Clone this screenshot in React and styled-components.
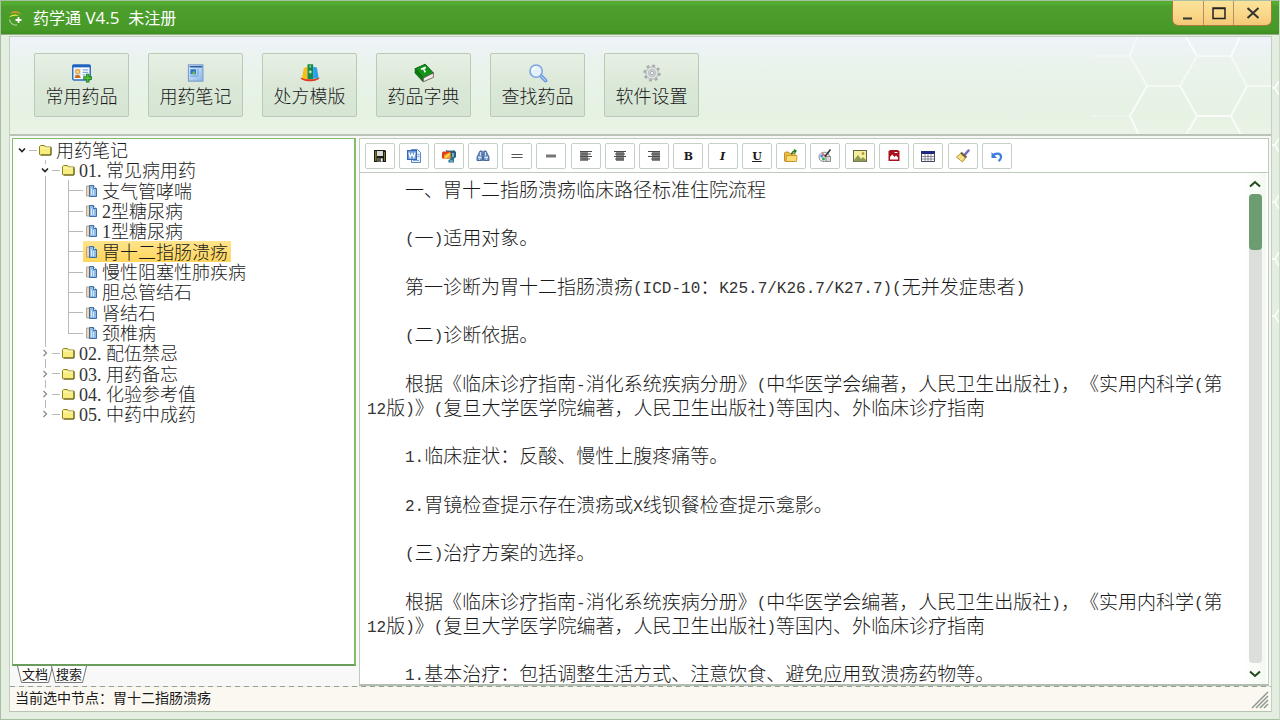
import React from "react";
import styled, { createGlobalStyle, css } from "styled-components";

const GlobalStyle = createGlobalStyle`
  *, *::before, *::after {
    box-sizing: border-box;
  }
  body {
    margin: 0;
    color: #1a1a1a;
    font-family: "Noto Sans CJK SC", sans-serif;
  }
  button {
    margin: 0;
    padding: 0;
    color: inherit;
    font: inherit;
    cursor: pointer;
  }
  svg {
    display: block;
    flex: none;
  }
`;

/* ---------- text ---------- */

// line-height 0 keeps the latin runs from growing the line box
const Latin = styled.span`
  color: #333;
  font-family: ${({ $serif }) => ($serif ? '"Liberation Serif", serif' : '"Liberation Mono", monospace')};
  font-size: ${({ $serif }) => ($serif ? 18 : 16)}px;
  font-weight: 400;
  line-height: 0;
  vertical-align: ${({ $serif }) => ($serif ? 0 : 1)}px;
`;

// Latin runs get a face that is half as wide as the Chinese characters
function MixedText({ children, serif }) {
  return children
    .split(/([\x20-\x7e]+)/)
    .filter(Boolean)
    .map((part, i) => (/^[\x20-\x7e]/.test(part) ? <Latin key={i} $serif={serif}>{part}</Latin> : part));
}

/* ---------- window ---------- */

const Window = styled.div`
  position: relative;
  display: flex;
  flex-direction: column;
  height: 100vh;
  border: 1px solid #a9bfa4;
  border-right-color: #cbd8c7;
  background: #e3eee0;
  overflow: hidden;
`;

const TitleBar = styled.header`
  display: flex;
  align-items: center;
  flex: none;
  height: 34px;
  padding: 0 7px;
  border-bottom: 1px solid #8fae84;
  background: linear-gradient(#53ad30 0, #53ad30 3px, #4c9f2c 5px, #479a28 85%, #3f8e22);
`;

const Title = styled.h1`
  flex: 1;
  margin: 0 0 2px 9px;
  color: #fff;
  font-size: 16px;
  font-weight: 400;
  line-height: 24px;
  white-space: pre;
`;

const Version = styled.span`
  font-family: "Open Sans", sans-serif;
  font-size: 17px;
  line-height: 0;
`;

const WindowButtons = styled.div`
  display: flex;
  align-self: flex-start;
  border: 1px solid #a5793f;
  border-top: 0;
  border-radius: 0 0 6px 6px;
  overflow: hidden;
`;

const WindowButton = styled.button`
  display: flex;
  align-items: center;
  justify-content: center;
  width: ${({ $wide }) => ($wide ? 38 : 30)}px;
  height: 24px;
  border: 0;
  background: linear-gradient(#fbe39a, #f9d98a 50%, #f3c877);
  & + & {
    border-left: 1px solid #b98f60;
  }
`;

const Frame = styled.div`
  position: relative;
  display: flex;
  flex-direction: column;
  flex: 1;
  min-height: 0;
  margin: 1px 7px 7px 8px;
  border: 1px solid #c3cfc0;
  border-bottom-color: #b5c5b1;
  background: #fff;
`;

/* ---------- ribbon ---------- */

const Ribbon = styled.nav`
  position: relative;
  display: flex;
  gap: 19px;
  flex: none;
  height: 99px;
  padding: 16px 24px 0;
  border-bottom: 2px solid #b9c4b7;
  background: linear-gradient(#eef3f9, #e9f3ea 35%, #e6f2e3 80%, #eaf3e6);
  overflow: hidden;
`;

const RibbonButton = styled.button`
  position: relative;
  display: flex;
  flex-direction: column;
  align-items: center;
  width: 95px;
  height: 64px;
  padding-top: 9px;
  border: 1px solid #b9cab8;
  border-radius: 2px;
  background: linear-gradient(#e7f0e4, #dbe8d8 50%, #d6e6d3);
  font-size: 18px;
  font-weight: 300;
  line-height: 24px;
`;

const Pattern = styled.svg`
  position: absolute;
  top: ${({ $top }) => $top}px;
  right: 0;
  fill: none;
  stroke: #fff;
`;

/* ---------- main area ---------- */

const Main = styled.main`
  display: flex;
  gap: 3px;
  flex: 1;
  min-height: 0;
  padding: 2px 2px 0;
  background: #f7f8f7;
`;

const Side = styled.aside`
  display: flex;
  flex-direction: column;
  flex: none;
  width: 344px;
`;

const TreePanel = styled.div`
  flex: 1;
  min-height: 0;
  border: 2px solid #82bd6b;
  border-width: 1px 2px 2px 1px;
  border-bottom-color: #6a9c5c;
  background: #fff;
`;

const Tree = styled.ul`
  margin: 0;
  padding: 1px 0 0 1px;
  list-style: none;
  font-size: 18px;
  font-weight: 300;
`;

const TreeRow = styled.li`
  display: flex;
  height: 20px;
  &:nth-child(3n) {
    height: 21px;
  }
`;

const guide = css`
  background: linear-gradient(#b9b9b9, #b9b9b9) no-repeat 8px 0 / 1px ${({ $line }) => $line || "0"};
`;

const Guide = styled.span`
  width: 23px;
  ${guide}
`;

const Branch = styled.span`
  display: flex;
  align-items: center;
  width: 23px;
  ${guide}
  &::after {
    content: "";
    flex: 1;
    height: 1px;
    margin-left: ${({ $leaf }) => ($leaf ? 8 : 0)}px;
    background: #b9b9b9;
  }
`;

const Toggle = styled.button`
  display: flex;
  align-items: center;
  justify-content: center;
  width: 15px;
  height: 12px;
  border: 0;
  background: #fff;
`;

const TreeLabel = styled.button`
  display: flex;
  align-items: center;
  gap: 4px;
  padding: 0 3px 0 2px;
  border: 0;
  background: ${({ $selected }) => ($selected ? "linear-gradient(#ffe48c, #ffd65c)" : "none")};
  white-space: nowrap;
`;

const NodeText = styled.span`
  padding-bottom: 2px;
  line-height: 18px;
`;

const Tabs = styled.div`
  display: flex;
  flex: none;
  height: 20px;
  padding-left: 5px;
`;

const Tab = styled.button`
  position: relative;
  width: 36px;
  height: 18px;
  margin-right: -2px;
  padding-bottom: 2px;
  border: 0;
  background: none;
  font-size: 13px;
  line-height: 14px;
  isolation: isolate;
  svg {
    position: absolute;
    inset: 0;
    z-index: -1;
  }
`;

/* ---------- editor ---------- */

const Editor = styled.section`
  display: flex;
  flex-direction: column;
  flex: 1;
  min-width: 0;
  border: 1px solid #bccbba;
  border-bottom: 2px solid #b3beb1;
  background: #fff;
`;

const EditorBar = styled.div`
  flex: none;
  height: 34px;
  padding: 4px 5px;
  border-bottom: 1px solid #bccbba;
`;

const EditorTools = styled.div`
  display: flex;
  justify-content: space-between;
  max-width: 647px;
`;

const Tool = styled.button`
  display: flex;
  align-items: center;
  justify-content: center;
  width: 30px;
  height: 26px;
  border: 1px solid #c5d0c4;
  border-radius: 2px;
  background: #fff;
  font: bold 11px "DejaVu Serif", serif;
  font-style: ${({ $italic }) => ($italic ? "italic" : "normal")};
  text-decoration: ${({ $underline }) => ($underline ? "underline" : "none")};
`;

const EditorBody = styled.div`
  display: flex;
  flex: 1;
  min-height: 0;
`;

const Page = styled.article`
  flex: 1;
  min-width: 0;
  padding: 4px 10px 0 7px;
  font-size: 19px;
  font-weight: 300;
  line-height: 24px;
  overflow: hidden;
  text-spacing-trim: space-all;
  p {
    margin: 0 0 24px;
    text-indent: 38px;
  }
  p:nth-child(even) {
    margin-bottom: 25px;
  }
`;

const ScrollBar = styled.div`
  display: flex;
  flex-direction: column;
  align-items: center;
  flex: none;
  width: 22px;
  margin-right: 2px;
  background: linear-gradient(90deg, #fff, #f3f8f1);
`;

const ScrollArrow = styled.button`
  display: flex;
  align-items: center;
  justify-content: center;
  width: 20px;
  height: 21px;
  border: 0;
  background: none;
`;

const ScrollTrack = styled.div`
  flex: 1;
  width: 13px;
  border-radius: 4px;
  background: #dcdedb;
`;

const ScrollThumb = styled.div`
  height: 56px;
  border-radius: 4px;
  background: #6c9c6f;
`;

/* ---------- status bar ---------- */

const StatusBar = styled.footer`
  display: flex;
  align-items: flex-start;
  justify-content: space-between;
  flex: none;
  height: 25px;
  padding: 0 2px 0 5px;
  background: #fbf8f1 repeating-linear-gradient(90deg, #94a293 0 5px, #e8eee6 5px 9px) no-repeat 0 0 / 100% 1px;
  font-size: 14px;
  line-height: 22px;
  svg {
    align-self: flex-end;
    margin-bottom: 2px;
  }
`;

/* ---------- icons ---------- */

const Icon = ({ size = 16, children }) => (
  <svg width={size} height={size} viewBox="0 0 16 16" fill="none" aria-hidden="true">{children}</svg>
);

const LogoIcon = () => (
  <Icon>
    <path d="M2 3.500C5 .5 10 .5 13.500 4.500C10 2.500 6 2.500 2 3.500z" fill="#f0943a" />
    <path d="M1 7.500C3 4 8 3.500 11.500 6C8 5.500 4 5.500 1 7.500z" fill="#f5ea3c" />
    <path d="M1.500 9.500C2 13 5 15.500 9 15" stroke="#a7cf98" strokeWidth="1.300" />
    <path d="M10.500 7v6M7.500 10h6" stroke="#fff" strokeWidth="1.800" />
  </Icon>
);

const CardIcon = () => (
  <Icon size={20}>
    <rect x="0.600" y="1.500" width="14" height="12" rx="1" fill="#fff" stroke="#2c6fc4" strokeWidth="1.200" />
    <path d="M0.500 2.500h14" stroke="#1f62c0" strokeWidth="2" />
    <rect x="2" y="4.500" width="5" height="7.500" fill="#cfe2f8" />
    <circle cx="4.500" cy="6.700" r="2" fill="#f0a02d" />
    <circle cx="4.500" cy="7" r="1" fill="#fbe0b0" />
    <path d="M2.200 12c0-3.500 4.600-3.500 4.600 0z" fill="#d26a12" />
    <path d="M8.500 5.500h4.500M8.500 7.500h4.500M8.500 9.500h2" stroke="#7fa9dc" />
    <path d="M9 12h7M12.500 8.500v7" stroke="#1f7f1c" strokeWidth="2.800" />
    <path d="M9.700 12h5.600M12.500 9.200v5.600" stroke="#4fc03c" strokeWidth="1.400" />
  </Icon>
);

const NoteIcon = () => (
  <Icon size={20}>
    <defs>
      <linearGradient id="note" x2="1" y2="1">
        <stop stopColor="#e6f2ff" />
        <stop offset="1" stopColor="#86b5ec" />
      </linearGradient>
    </defs>
    <rect x="2" y="1.500" width="11.500" height="13" fill="url(#note)" stroke="#7fa0cc" />
    <path d="M3 3h10" stroke="#2a5fa8" strokeWidth="1.200" />
    <rect x="3.500" y="5" width="4.500" height="4" fill="#2f74c9" />
    <path d="M4.500 9l1.800-3 1.500 3z" fill="#6cc04a" />
    <path d="M9.500 4.500v5.500M3.500 10.500h6" stroke="#6f9fd8" strokeWidth=".8" />
  </Icon>
);

const BooksIcon = () => (
  <Icon size={20}>
    <path d="M3 4l3-1v10H1.500z" fill="#f8bd17" />
    <rect x="6" y="1" width="4.500" height="12" fill="#168a49" />
    <path d="M8.200 2v1.500M7 7h2.500M8.200 5.800v2.500" stroke="#b9e9c5" />
    <path d="M10.500 3l3 .5 1.500 9h-4.500z" fill="#2aa0e8" />
    <path d="M.5 11.500c3 2 12 2 15 0 0 4-15 4-15 0z" fill="#e4361d" />
  </Icon>
);

const BookIcon = () => (
  <Icon size={20}>
    <path d="M1 4.500l8-3.500 6.500 7-8 4z" fill="#10951a" stroke="#075c0e" strokeWidth=".8" />
    <path d="M1 4.500L.8 8l6.500 7 .2-3z" fill="#0b7a14" stroke="#075c0e" strokeWidth=".6" />
    <path d="M7.500 12l8-4v3.500l-8 3.500z" fill="#ececec" stroke="#7a5a5a" strokeWidth=".7" />
    <path d="M5.500 5l4-1.500M7.500 4.200L9 7.500" stroke="#fff" strokeWidth="1.300" />
  </Icon>
);

const SearchIcon = () => (
  <Icon size={20}>
    <path d="M10 10l4 4" stroke="#5f92db" strokeWidth="3" strokeLinecap="round" />
    <path d="M10.500 10.500l3.500 3.500" stroke="#b6d3f8" strokeLinecap="round" />
    <circle cx="6.500" cy="6.500" r="4.900" fill="#e4f2fd" stroke="#7fa4e0" strokeWidth="1.300" />
    <path d="M3.500 6a3 3 0 0 1 3-2.500" stroke="#fff" strokeWidth="1.200" />
  </Icon>
);

const GearIcon = () => (
  <Icon size={20}>
    <circle cx="8" cy="8" r="5.900" stroke="#a5a8ab" strokeWidth="2" strokeDasharray="2.200 2.434" />
    <circle cx="8" cy="8" r="4.900" fill="#e4e6e7" stroke="#b0b3b5" strokeWidth=".8" />
    <circle cx="8" cy="8" r="3" fill="#d2d5d6" stroke="#b7babb" strokeWidth=".7" />
    <circle cx="8" cy="8" r="1.400" fill="#f3f5f4" stroke="#9fa2a5" strokeWidth=".7" />
  </Icon>
);

const FolderIcon = () => (
  <svg width="13" height="12" viewBox="0 0 13 12" aria-hidden="true">
    <path d="M.5 10V2.500l1-1h4l1 1.500h5.500v7l-.5 1h-10.500z" fill="#f7ec7d" stroke="#8f8420" />
    <path d="M1.500 4h9.500" stroke="#fffcc8" />
    <path d="M12 3.500v7.500H2" fill="none" stroke="#5e5a1a" />
  </svg>
);

const PageIcon = () => (
  <svg width="13" height="12" viewBox="0 0 13 12" aria-hidden="true">
    <path d="M1.500 1h4v10h-4z" fill="#f5d3ae" stroke="#a3937f" strokeWidth=".8" />
    <path d="M4.500.5h4l3 3v8h-7z" fill="#8fbbe8" stroke="#3d6ea6" />
    <path d="M8.500.5v3h3" fill="#fff" stroke="#3d6ea6" />
    <path d="M6.500 3.500v6.500M8.500 5v5" stroke="#d7e9fb" />
  </svg>
);

const Chevron = ({ open }) => (
  <svg width="8" height="8" viewBox="0 0 8 8" fill="none" aria-hidden="true">
    {open
      ? <path d="M1 2.500l3 3 3-3" stroke="#222" strokeWidth="1.600" />
      : <path d="M2.500 1l3 3-3 3" stroke="#8b8b8b" strokeWidth="1.300" />}
  </svg>
);

const ScrollChevron = ({ down }) => (
  <svg width="12" height="8" viewBox="0 0 12 8" fill="none" aria-hidden="true">
    <path d={down ? "M1 1.500l5 4.500 5-4.500" : "M1 6.500l5-4.500 5 4.500"} stroke="#1f4a18" strokeWidth="2" />
  </svg>
);

const SaveIcon = () => (
  <Icon>
    <path d="M2 2h11l1 1v11H2z" fill="#1b1b14" />
    <path d="M3 3h1.500v10H3zM12 4h1v9h-1z" fill="#77743a" />
    <rect x="5" y="3" width="6" height="5" fill="#d9d9d9" />
    <rect x="5" y="10" width="6" height="4" fill="#5c5c55" />
    <rect x="9" y="10.500" width="1.500" height="3" fill="#fff" />
  </Icon>
);

const WordIcon = () => (
  <Icon>
    <path d="M5.500 1.500h6l3 3v10h-9z" fill="#e4effc" stroke="#5f88c4" />
    <path d="M11.500 6.500h2M11.500 8.500h2M7 12.500h6" stroke="#7ea2d3" />
    <rect x="1.500" y="2.500" width="9" height="9" fill="#6f9ad8" stroke="#3566b3" />
    <path d="M3 4.500l1.200 5L6 5.500l1.800 4 1.200-5" stroke="#fff" strokeWidth="1.200" />
  </Icon>
);

const ZipIcon = () => (
  <Icon>
    <path d="M5 2h8l2 2v5l-2 1.500H6z" fill="#24607f" />
    <path d="M8.500 9h4.500v5.500H7.500V12l2-1z" fill="#2a7394" />
    <path d="M6 2.500h6.500" stroke="#8fc1d6" />
    <path d="M12 5v4" stroke="#bcd9e6" strokeWidth="1.200" />
    <path d="M9 13h3" stroke="#9fc8da" />
    <path d="M1 4.500l1-1h7.500v7H1z" fill="#e33a1b" />
    <path d="M3 10.500V7l5-2.500h1.500v6z" fill="#f5a91d" />
    <path d="M4.500 9.500L8.500 6" stroke="#ffe45a" strokeWidth="1.500" />
  </Icon>
);

const BinocularsIcon = () => (
  <Icon>
    <path d="M5 3h2.200l.3 4.500v5H2V9zM8.800 3H11l3 6v3.500H8.500v-5z" fill="#6d93c6" stroke="#2f5288" strokeWidth=".8" />
    <path d="M3 9.500h3.500M9.500 9.500H13" stroke="#e3eefb" strokeWidth="1.400" />
    <path d="M5.500 4v3.500M10.500 4v3.500M4 11.500h1M11 11.500h1" stroke="#cfe0f5" />
  </Icon>
);

const AlignIcon = ({ type }) => {
  const left = { left: 2, center: 4, right: 6 }[type];
  return (
    <Icon>
      <path d={`M${left} 3h8v10h-8z`} fill="#858585" />
      <path
        d={type === "right" ? "M2 3.500h12M5 6h9M2 8.500h12M5 11h9" : "M2 3.500h12M3 6h10M2 8.500h12M3 11h9"}
        stroke="#4a4a4a"
      />
    </Icon>
  );
};

const OpenIcon = () => (
  <Icon>
    <path d="M1.500 13V5l1-1h3l1 1.500h5.500v8H2z" fill="#f0bd45" stroke="#b27b16" strokeWidth=".8" />
    <path d="M3 13.500l.5-6H14l-.5 6z" fill="#fbdc73" stroke="#c18b20" strokeWidth=".8" />
    <path d="M8.500 6.500C9 4 10.500 3 12.500 3M11 1.500L13 3l-1.500 2" stroke="#267a26" strokeWidth="1.300" />
  </Icon>
);

const PaletteIcon = () => (
  <Icon>
    <path d="M2 9c0-4 5-6 9-4l2 4c0 5-11 7-11 0z" fill="#e8ecf0" stroke="#777f88" strokeWidth=".9" />
    <circle cx="4.800" cy="8" r="1.500" fill="#3d8ae0" />
    <circle cx="6.500" cy="11" r="1.400" fill="#31a54a" />
    <path d="M5.500 5.500l5 5" stroke="#e44" strokeWidth="1.400" />
    <path d="M13.500 1.500L8 8.500" stroke="#333" strokeWidth="1.600" />
    <path d="M9 8.500h4.500v5H9z" fill="#d8d8d8" stroke="#777" strokeWidth=".8" />
  </Icon>
);

const PictureIcon = () => (
  <Icon>
    <rect x="1.500" y="2.500" width="13" height="11" fill="#f4ee9b" stroke="#666647" />
    <path d="M2 12l4-5 3 4 2-2 3 3v1.500H2z" fill="#8d9a58" />
    <circle cx="11" cy="5.500" r="1.300" fill="#a58a38" />
  </Icon>
);

const FlashIcon = () => (
  <Icon>
    <path d="M2.500 3.500l1.500-1.500h8l1.500 1.500V13h-11z" fill="#a6131d" />
    <path d="M4 11.500V9l2.200-2.500L8.500 9 10 7.500 12 9.500v2z" fill="#fff" />
    <path d="M8.500 4.500h3" stroke="#fff" />
  </Icon>
);

const TableIcon = () => (
  <Icon>
    <rect x="1.500" y="3.500" width="13" height="10" fill="#fff" stroke="#444a5e" />
    <rect x="1" y="3" width="14" height="3" fill="#1c2a80" />
    <path d="M2 8.500h12M2 11h12M5 6v7M8 6v7M11 6v7" stroke="#6b6f7d" strokeWidth=".8" />
  </Icon>
);

const BrushIcon = () => (
  <Icon>
    <path d="M13.500 2.500L10 6.500" stroke="#6a6cc0" strokeWidth="2.500" strokeLinecap="round" />
    <path d="M5.500 5.500l5 4.500-3 4L1.500 9z" fill="#f3d76a" stroke="#a88432" strokeWidth=".8" />
    <path d="M6 4.500l5.500 5" stroke="#6b5a3a" strokeWidth="1.800" />
    <path d="M6 7.500l-2.500 2.500M8 9l-2.500 3" stroke="#fff5bd" />
  </Icon>
);

const UndoIcon = () => (
  <Icon>
    <path d="M4 7.500C6.500 4.500 12.500 5 12 9.500c-.2 1.600-1 2.500-2.500 3.500" stroke="#3f7ee0" strokeWidth="2.200" />
    <path d="M2.500 4v6H8z" fill="#3f7ee0" />
  </Icon>
);

const Bar = ({ double }) => (
  <Icon>
    {double
      ? <path d="M2.500 6.500h11M2.500 9.500h11" stroke="#555" />
      : <path d="M3 8h10" stroke="#777" strokeWidth="3" />}
  </Icon>
);

const HexPattern = () => (
  <Pattern $top={0} width="180" height="98" viewBox="0 0 180 98" aria-hidden="true">
    <g strokeWidth="2" opacity=".75">
      <path d="M46 0l-7 19 17 30h33l17-30h34l16 30h24" opacity=".7" />
      <path d="M89 49l17 30h34l16-30M56 49L39 79l9 19M106 79l-11 19M140 79l10 19M106 19L95 0M140 19l9-19" />
      <path d="M0 19h39M0 79h39" opacity=".35" />
    </g>
  </Pattern>
);

const EdgePattern = () => (
  <Pattern $top={34} width="8" height="686" viewBox="0 0 8 686" aria-hidden="true">
    <path
      d="M8 46l-4 7H0M4 53l4 7M8 103l-4 7H0M4 110l4 7M8 160l-4 7H0M4 167l4 7M8 217l-4 7H0M4 224l4 7M8 274l-4 7H0M4 281l4 7"
      strokeWidth="1.500"
    />
  </Pattern>
);

/* ---------- data ---------- */

const ribbonItems = [
  ["常用药品", CardIcon],
  ["用药笔记", NoteIcon],
  ["处方模版", BooksIcon],
  ["药品字典", BookIcon],
  ["查找药品", SearchIcon],
  ["软件设置", GearIcon],
];

const treeNodes = [
  { text: "用药笔记", depth: 0, open: true },
  { text: "01. 常见病用药", depth: 1, open: true },
  { text: "支气管哮喘", depth: 2 },
  { text: "2型糖尿病", depth: 2 },
  { text: "1型糖尿病", depth: 2 },
  { text: "胃十二指肠溃疡", depth: 2, selected: true },
  { text: "慢性阻塞性肺疾病", depth: 2 },
  { text: "胆总管结石", depth: 2 },
  { text: "肾结石", depth: 2 },
  { text: "颈椎病", depth: 2, last: true },
  { text: "02. 配伍禁忌", depth: 1 },
  { text: "03. 用药备忘", depth: 1 },
  { text: "04. 化验参考值", depth: 1 },
  { text: "05. 中药中成药", depth: 1, last: true },
];

const tools = [
  { name: "保存", icon: <SaveIcon /> },
  { name: "导出 Word", icon: <WordIcon /> },
  { name: "压缩", icon: <ZipIcon /> },
  { name: "查找", icon: <BinocularsIcon /> },
  { name: "双线", icon: <Bar double /> },
  { name: "横线", icon: <Bar /> },
  { name: "左对齐", icon: <AlignIcon type="left" /> },
  { name: "居中", icon: <AlignIcon type="center" /> },
  { name: "右对齐", icon: <AlignIcon type="right" /> },
  { name: "粗体", icon: "B" },
  { name: "斜体", icon: "I", italic: true },
  { name: "下划线", icon: "U", underline: true },
  { name: "打开", icon: <OpenIcon /> },
  { name: "颜色", icon: <PaletteIcon /> },
  { name: "图片", icon: <PictureIcon /> },
  { name: "动画", icon: <FlashIcon /> },
  { name: "表格", icon: <TableIcon /> },
  { name: "格式刷", icon: <BrushIcon /> },
  { name: "撤销", icon: <UndoIcon /> },
];

const guideline =
  "根据《临床诊疗指南-消化系统疾病分册》(中华医学会编著，人民卫生出版社)，《实用内科学(第12版)》(复旦大学医学院编著，人民卫生出版社)等国内、外临床诊疗指南";

const paragraphs = [
  "一、胃十二指肠溃疡临床路径标准住院流程",
  "(一)适用对象。",
  "第一诊断为胃十二指肠溃疡(ICD-10：K25.7/K26.7/K27.7)(无并发症患者)",
  "(二)诊断依据。",
  guideline,
  "1.临床症状：反酸、慢性上腹疼痛等。",
  "2.胃镜检查提示存在溃疡或X线钡餐检查提示龛影。",
  "(三)治疗方案的选择。",
  guideline,
  "1.基本治疗：包括调整生活方式、注意饮食、避免应用致溃疡药物等。",
];

/* ---------- components ---------- */

function TreeNode({ node }) {
  const leaf = node.depth === 2;
  return (
    <TreeRow>
      {node.depth > 0 && <Guide />}
      {leaf && <Guide $line="100%" />}
      <Branch $leaf={leaf} $line={node.depth === 0 ? "0" : node.last ? "50%" : "100%"}>
        {!leaf && (
          <Toggle aria-label={node.text} aria-expanded={!!node.open}>
            <Chevron open={node.open} />
          </Toggle>
        )}
      </Branch>
      <TreeLabel $selected={node.selected}>
        {leaf ? <PageIcon /> : <FolderIcon />}
        <NodeText><MixedText serif>{node.text}</MixedText></NodeText>
      </TreeLabel>
    </TreeRow>
  );
}

function DocTab({ children }) {
  return (
    <Tab>
      <svg width="36" height="18" viewBox="0 0 36 18" aria-hidden="true">
        <path d="M.5 0l4 16.500h27L35.500 0" fill="#fff" stroke="#777" />
      </svg>
      {children}
    </Tab>
  );
}

export default function App() {
  return (
    <>
      <GlobalStyle />
      <Window>
        <TitleBar>
          <LogoIcon />
          <Title>药学通<Version>{" V4.5  "}</Version>未注册</Title>
          <WindowButtons>
            <WindowButton aria-label="最小化">
              <svg width="16" height="14" viewBox="0 0 16 14"><path d="M3 12.500h9" stroke="#333" strokeWidth="2" /></svg>
            </WindowButton>
            <WindowButton aria-label="最大化">
              <svg width="16" height="14" viewBox="0 0 16 14" fill="none">
                <path d="M2 2h12v10.500H2zM2 2.500h12" stroke="#222" strokeWidth="1.500" />
              </svg>
            </WindowButton>
            <WindowButton $wide aria-label="关闭">
              <svg width="14" height="14" viewBox="0 0 14 14"><path d="M1.500 2l11 10M12.500 2l-11 10" stroke="#333" strokeWidth="2" /></svg>
            </WindowButton>
          </WindowButtons>
        </TitleBar>
        <EdgePattern />

        <Frame>
          <Ribbon>
            <HexPattern />
            {ribbonItems.map(([text, ItemIcon]) => (
              <RibbonButton key={text}>
                <ItemIcon />
                {text}
              </RibbonButton>
            ))}
          </Ribbon>

          <Main>
            <Side>
              <TreePanel>
                <Tree>
                  {treeNodes.map(node => <TreeNode key={node.text} node={node} />)}
                </Tree>
              </TreePanel>
              <Tabs>
                <DocTab>文档</DocTab>
                <DocTab>搜索</DocTab>
              </Tabs>
            </Side>

            <Editor>
              <EditorBar>
                <EditorTools>
                  {tools.map(tool => (
                    <Tool key={tool.name} aria-label={tool.name} $italic={tool.italic} $underline={tool.underline}>
                      {tool.icon}
                    </Tool>
                  ))}
                </EditorTools>
              </EditorBar>
              <EditorBody>
                <Page>
                  {paragraphs.map((text, i) => <p key={i}><MixedText>{text}</MixedText></p>)}
                </Page>
                <ScrollBar>
                  <ScrollArrow aria-label="向上滚动"><ScrollChevron /></ScrollArrow>
                  <ScrollTrack><ScrollThumb /></ScrollTrack>
                  <ScrollArrow aria-label="向下滚动"><ScrollChevron down /></ScrollArrow>
                </ScrollBar>
              </EditorBody>
            </Editor>
          </Main>

          <StatusBar>
            <span>当前选中节点：胃十二指肠溃疡</span>
            <svg width="18" height="18" viewBox="0 0 18 18" aria-hidden="true">
              <path d="M1 17L17 1M5 17L17 5M9 17l8-8M13 17l4-4" stroke="#8e9990" strokeWidth="1.500" />
            </svg>
          </StatusBar>
        </Frame>
      </Window>
    </>
  );
}
